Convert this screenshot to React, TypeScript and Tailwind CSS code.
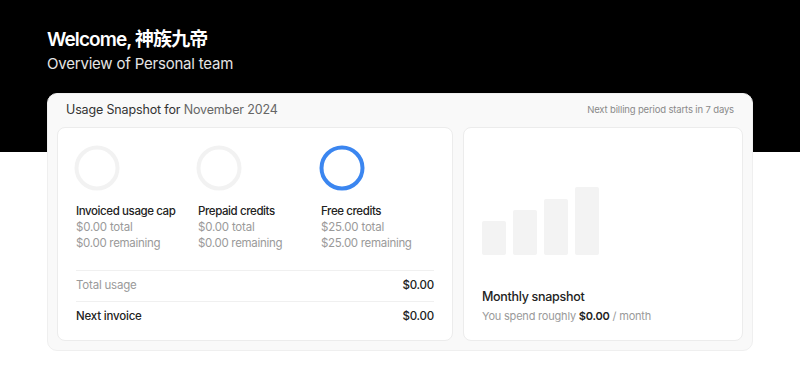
import React from "react";

function Ring({ color }: { color: string }) {
  return (
    <svg width="46" height="46" viewBox="0 0 46 46">
      <circle cx="23" cy="23" r="20.5" fill="none" stroke={color} strokeWidth="4" />
    </svg>
  );
}

function Credit({ title, total, remaining, color }: { title: string; total: string; remaining: string; color: string }) {
  return (
    <div className="flex flex-col">
      <div className="ml-[-2px]">
        <Ring color={color} />
      </div>
      <div className="mt-[12px] text-[11.5px] leading-[16px] font-medium text-[#222] tracking-[-0.4px]">{title}</div>
      <div className="text-[11.5px] leading-[16px] text-[#9a9a9a] tracking-[-0.2px]">{total}</div>
      <div className="text-[11.5px] leading-[16px] text-[#9a9a9a] tracking-[-0.3px]">{remaining}</div>
    </div>
  );
}

export default function App() {
  return (
    <div className="relative w-[800px] h-[369px] bg-white overflow-hidden" style={{ fontFamily: "Inter, 'Noto Sans CJK SC', sans-serif" }}>
      <div className="absolute left-0 top-0 w-full h-[152px] bg-black" />
      <div className="relative px-[47px] pt-[27px]">
        <h1 className="text-[19px] leading-[26px] font-semibold text-white tracking-[-0.9px]">Welcome, 神族九帝</h1>
        <p className="text-[15px] leading-[20px] text-[#e5e5e5] tracking-[-0.2px] mt-[1px]">Overview of Personal team</p>
        <div className="mt-[19px] h-[258px] rounded-[10px] bg-[#f9f9f9] border border-[#efefef] px-[9px] pb-[9px] flex flex-col">
          <div className="flex items-center justify-between h-[33px] px-[9px]">
            <div className="text-[12.5px] text-[#333] tracking-[-0.15px]">
              Usage Snapshot for <span className="text-[#666]">November 2024</span>
            </div>
            <div className="text-[9.5px] text-[#8a8a8a] tracking-[-0.15px]">Next billing period starts in 7 days</div>
          </div>
          <div className="flex-1 flex gap-[10px]">
            <div className="w-[396px] bg-white rounded-[8px] border border-[#ececec] px-[18px] pt-[17px] flex flex-col">
              <div className="grid grid-cols-[122px_123px_122px]">
                <Credit title="Invoiced usage cap" total="$0.00 total" remaining="$0.00 remaining" color="#f2f2f2" />
                <Credit title="Prepaid credits" total="$0.00 total" remaining="$0.00 remaining" color="#f2f2f2" />
                <Credit title="Free credits" total="$25.00 total" remaining="$25.00 remaining" color="#3b86f0" />
              </div>
              <div className="mt-[19px] border-t border-[#f0f0f0] flex items-center justify-between h-[31px] text-[11.5px] tracking-[-0.2px]">
                <span className="text-[#9a9a9a]">Total usage</span>
                <span className="text-[#222] font-medium">$0.00</span>
              </div>
              <div className="border-t border-[#f0f0f0] flex items-center justify-between h-[31px] text-[11.5px] tracking-[-0.2px]">
                <span className="text-[#222] font-medium">Next invoice</span>
                <span className="text-[#222] font-medium">$0.00</span>
              </div>
            </div>
            <div className="flex-1 bg-white rounded-[8px] border border-[#ececec] px-[18px] flex flex-col">
              <div className="mt-[59px] flex items-end gap-[7px] h-[68px]">
                <div className="w-[24px] h-[34px] bg-[#f3f3f3] rounded-[2px]" />
                <div className="w-[24px] h-[45px] bg-[#f3f3f3] rounded-[2px]" />
                <div className="w-[24px] h-[56px] bg-[#f3f3f3] rounded-[2px]" />
                <div className="w-[24px] h-[68px] bg-[#f3f3f3] rounded-[2px]" />
              </div>
              <div className="mt-[33px] text-[12.5px] leading-[18px] font-medium text-[#222] tracking-[-0.3px]">Monthly snapshot</div>
              <div className="mt-[2px] text-[11px] leading-[16px] text-[#9a9a9a] tracking-[-0.2px]">
                You spend roughly <span className="font-semibold text-[#222]">$0.00</span> / month
              </div>
            </div>
          </div>
        </div>
      </div>
    </div>
  );
}
